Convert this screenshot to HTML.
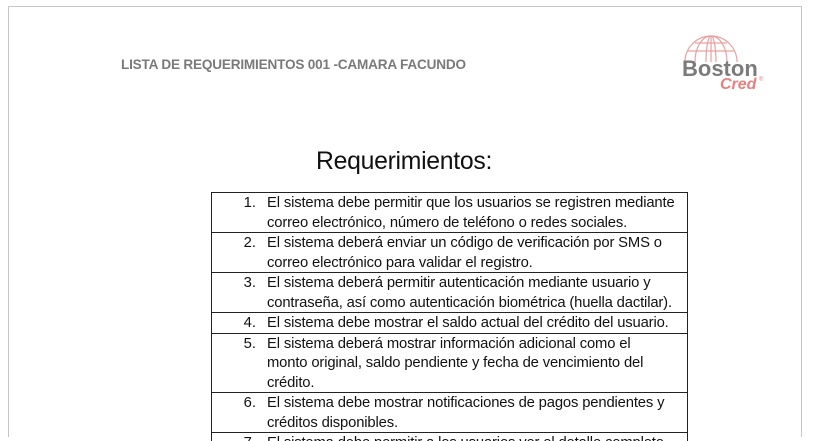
<!DOCTYPE html>
<html><head><meta charset="utf-8"><style>
html,body{margin:0;width:814px;height:441px;overflow:hidden}
body{background:#fff;position:relative;font-family:"Liberation Sans",sans-serif}
.page{position:absolute;left:8px;top:6px;width:792px;height:430px;border:1px solid #c6c6c6;border-bottom:none}
.hdr{position:absolute;left:121px;top:57px;font-size:13.6px;font-weight:bold;color:#7a7a7a;letter-spacing:-0.2px}
.title{position:absolute;left:316px;top:148px;font-size:24.8px;color:#111;letter-spacing:-0.3px}
table{position:absolute;left:211px;top:192px;width:477px;border-collapse:collapse}
td{border:1px solid #222;padding:0;font-size:14.8px;line-height:19.5px;color:#111;vertical-align:top}
.r{display:flex;position:relative;top:1px}
.n{width:44px;text-align:right;flex:none}
.t{padding-left:11px;letter-spacing:-0.15px;white-space:nowrap}
</style></head><body>
<div class="page"></div>
<div class="hdr">LISTA DE REQUERIMIENTOS 001 -CAMARA FACUNDO</div>
<svg style="position:absolute;left:682px;top:34px" width="90" height="58" viewBox="0 0 90 58">
<g fill="none" stroke="#eaa0a0" stroke-width="1.2">
<path d="M3 28 A26 26 0 0 1 55 28"/>
<path d="M13 28 A16 26 0 0 1 45 28"/>
<path d="M24 28 A5 26 0 0 1 34 28"/>
<path d="M29 2 V28"/>
<path d="M6 17 H52 M13 9 H45"/>
</g>
<text x="0" y="42" font-family="Liberation Sans" font-weight="bold" font-size="22" fill="#7b7b7b">Boston</text>
<text x="38" y="55" font-family="Liberation Sans" font-style="italic" font-weight="bold" font-size="16" fill="#e88080">Cred</text>
<text x="77" y="47" font-family="Liberation Sans" font-size="6" fill="#e88080">®</text>
</svg>
<div class="title">Requerimientos:</div>
<table>
<tr><td><div class="r"><span class="n">1.</span><span class="t">El sistema debe permitir que los usuarios se registren mediante<br>correo electrónico, número de teléfono o redes sociales.</span></div></td></tr>
<tr><td><div class="r"><span class="n">2.</span><span class="t">El sistema deberá enviar un código de verificación por SMS o<br>correo electrónico para validar el registro.</span></div></td></tr>
<tr><td><div class="r"><span class="n">3.</span><span class="t">El sistema deberá permitir autenticación mediante usuario y<br>contraseña, así como autenticación biométrica (huella dactilar).</span></div></td></tr>
<tr><td><div class="r"><span class="n">4.</span><span class="t">El sistema debe mostrar el saldo actual del crédito del usuario.</span></div></td></tr>
<tr><td><div class="r"><span class="n">5.</span><span class="t">El sistema deberá mostrar información adicional como el<br>monto original, saldo pendiente y fecha de vencimiento del<br>crédito.</span></div></td></tr>
<tr><td><div class="r"><span class="n">6.</span><span class="t">El sistema debe mostrar notificaciones de pagos pendientes y<br>créditos disponibles.</span></div></td></tr>
<tr><td><div class="r"><span class="n">7.</span><span class="t">El sistema debe permitir a los usuarios ver el detalle completo</span></div></td></tr>
</table>
</body></html>
